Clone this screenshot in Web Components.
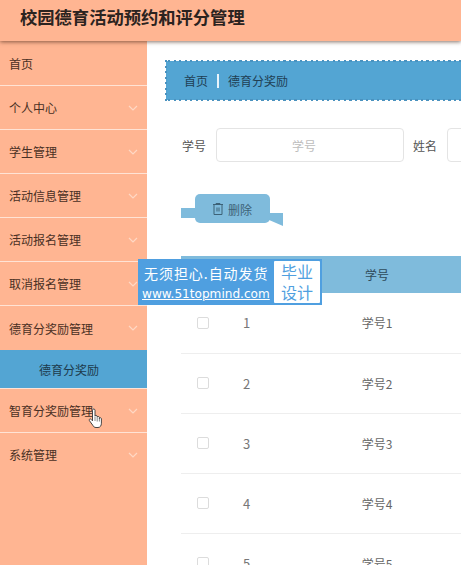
<!DOCTYPE html>
<html lang="zh">
<head>
<meta charset="utf-8">
<title>校园德育活动预约和评分管理</title>
<style>
  html, body {
    margin: 0;
    height: 100%;
    overflow: hidden;
    background: #fff;
    font-family: "Noto Sans CJK SC", "Liberation Sans", sans-serif;
    font-size: 12px;
    color: #333;
  }
</style>
</head>
<body>
<app-shell>
  <span slot="title">校园德育活动预约和评分管理</span>
  <side-nav slot="nav">
    <nav-item plain>首页</nav-item>
    <nav-item>个人中心</nav-item>
    <nav-item>学生管理</nav-item>
    <nav-item>活动信息管理</nav-item>
    <nav-item>活动报名管理</nav-item>
    <nav-item>取消报名管理</nav-item>
    <nav-item sub="德育分奖励">德育分奖励管理</nav-item>
    <nav-item>智育分奖励管理</nav-item>
    <nav-item last>系统管理</nav-item>
  </side-nav>
  <crumb-bar first="首页" second="德育分奖励"></crumb-bar>
  <search-row></search-row>
  <ribbon-button>删除</ribbon-button>
  <data-table></data-table>
</app-shell>
<promo-badge></promo-badge>
<hand-cursor></hand-cursor>

<script>
const chevron = `<svg width="10" height="6" viewBox="0 0 10 6" fill="none" stroke="#ffd8c4" stroke-width="1.2"><path d="M1 1l4 4 4-4"/></svg>`;

class AppShell extends HTMLElement {
  constructor() {
    super();
    this.attachShadow({mode: 'open'});
    this.shadowRoot.innerHTML = `
      <style>
        :host { display: flex; flex-direction: column; width: 461px; height: 565px; overflow: hidden; }
        header {
          flex: none;
          height: 41px;
          box-sizing: border-box;
          padding: 0 0 9px 20px;
          display: flex;
          align-items: center;
          background: #ffb592;
          box-shadow: 0 1px 4px rgba(70, 40, 25, .65);
          position: relative;
          z-index: 1;
          font-size: 17.3px;
          font-weight: 700;
          color: #2b2320;
        }
        .body { flex: 1; display: flex; min-height: 0; }
        .nav { flex: none; width: 147px; background: #ffb592; }
        main {
          flex: 1;
          min-width: 0;
          padding: 19px 0 0 18px;
          overflow: hidden;
        }
      </style>
      <header><slot name="title"></slot></header>
      <div class="body">
        <div class="nav"><slot name="nav"></slot></div>
        <main><slot></slot></main>
      </div>`;
  }
}

class SideNav extends HTMLElement {
  constructor() {
    super();
    this.attachShadow({mode: 'open'});
    this.shadowRoot.innerHTML = `
      <style>:host { display: block; }</style>
      <slot></slot>`;
  }
}

class NavItem extends HTMLElement {
  constructor() {
    super();
    this.attachShadow({mode: 'open'});
    const sub = this.getAttribute('sub');
    this.shadowRoot.innerHTML = `
      <style>
        :host { display: block; color: #4a3024; font-size: 12px; }
        .row {
          height: 43px;
          padding: 0 9px;
          display: flex;
          align-items: center;
          justify-content: space-between;
          border-bottom: 1px solid #ffe3d5;
        }
        .sub {
          height: 38px;
          display: flex;
          align-items: center;
          justify-content: center;
          padding-right: 9px;
          background: #53a5d3;
          color: #1d3a4c;
          border-bottom: 1px solid #ffe3d5;
        }
        :host([plain]) .row { height: 44px; }
        :host([sub]) .row { border-bottom: 0; height: 44px; }
        :host([last]) .row { border-bottom: 0; }
      </style>
      <div class="row"><span><slot></slot></span>${this.hasAttribute('plain') ? '' : chevron}</div>
      ${sub ? `<div class="sub">${sub}</div>` : ''}`;
  }
}

class CrumbBar extends HTMLElement {
  constructor() {
    super();
    this.attachShadow({mode: 'open'});
    const dot = '#4a92bf';
    this.shadowRoot.innerHTML = `
      <style>
        :host {
          display: flex;
          align-items: center;
          box-sizing: border-box;
          width: 320px;
          height: 41px;
          padding-left: 19px;
          color: #1f3f53;
          font-size: 12px;
          background:
            repeating-linear-gradient(90deg, ${dot} 0 2px, transparent 2px 5.5px) 3px 0 / 100% 2px no-repeat,
            repeating-linear-gradient(90deg, ${dot} 0 2px, transparent 2px 5.5px) 3px 100% / 100% 2px no-repeat,
            repeating-linear-gradient(0deg, ${dot} 0 2px, transparent 2px 5.5px) 0 0 / 2px 100% no-repeat,
            linear-gradient(#53a5d3, #53a5d3) 1px 1px / 100% 39px no-repeat;
        }
        i { width: 2px; height: 14px; margin: 0 9px; background: #e8f4fb; }
      </style>
      <span>${this.getAttribute('first')}</span><i></i><span>${this.getAttribute('second')}</span>`;
  }
}

class SearchRow extends HTMLElement {
  constructor() {
    super();
    this.attachShadow({mode: 'open'});
    this.shadowRoot.innerHTML = `
      <style>
        :host { display: flex; align-items: center; gap: 10px; margin: 27px 0 0 17px; width: 320px; color: #555; font-size: 12px; }
        label { flex: none; width: 24px; }
        .field {
          flex: none;
          box-sizing: border-box;
          width: 188px;
          height: 34px;
          padding-right: 12px;
          border: 1px solid #e4e4e4;
          border-radius: 4px;
          display: flex;
          align-items: center;
          justify-content: center;
          color: #bdbdbd;
        }
        .name { margin-left: -1px; }
        .second { width: 80px; }
      </style>
      <label>学号</label><div class="field">学号</div>
      <label class="name">姓名</label><div class="field second"></div>`;
  }
}

class RibbonButton extends HTMLElement {
  constructor() {
    super();
    this.attachShadow({mode: 'open'});
    this.shadowRoot.innerHTML = `
      <style>
        :host { display: block; position: relative; width: 102px; height: 33px; margin: 32px 0 0 16px; color: #3d6277; font-size: 12px; }
        .tail { position: absolute; background: #7fbbdc; }
        .left { left: 0; top: 14px; width: 16px; height: 10px; }
        .right { left: 87px; top: 19px; width: 15px; height: 13px; clip-path: polygon(0 0, 100% 0, 100% 100%, 0 50%); }
        .face {
          position: absolute;
          left: 14px;
          top: 0;
          width: 75px;
          height: 29px;
          padding-top: 1px;
          box-sizing: border-box;
          border-radius: 5px;
          background: #7fbbdc;
          display: flex;
          align-items: center;
          justify-content: center;
          gap: 5px;
        }
      </style>
      <div class="tail left"></div>
      <div class="tail right"></div>
      <div class="face">
        <svg width="10" height="12" viewBox="0 0 10 12" fill="none" stroke="#3d6277" stroke-width="1"><path d="M0 1.500h10M3 1.500V.5h4v1M1 1.500v10h8v-10M4 4.500v4M6 4.500v4"/></svg>
        <span><slot></slot></span>
      </div>`;
  }
}

class DataTable extends HTMLElement {
  constructor() {
    super();
    this.attachShadow({mode: 'open'});
    const rows = [1, 2, 3, 4, 5].map(n => `
      <div class="row">
        <span class="check"><b></b></span><span class="idx">${n}</span><span class="num">学号${n}</span>
      </div>`).join('');
    this.shadowRoot.innerHTML = `
      <style>
        :host { display: block; margin: 29px 0 0 16px; width: 320px; font-size: 12px; color: #666; }
        .head, .row { display: grid; grid-template-columns: 44px 78px 148px 1fr; align-items: center; }
        .head { height: 37px; background: #7fbbdc; color: #2e4a5a; }
        .row { height: 58px; padding-bottom: 1px; border-bottom: 1px solid #eee; }
        .head + .row { height: 59px; }
        .check { padding-left: 16px; }
        b { display: block; box-sizing: border-box; width: 12px; height: 12px; border: 1px solid #dcdcdc; border-radius: 2px; }
        .idx { padding-left: 18px; font-size: 13px; color: #777; }
        .num, .title { justify-self: center; }
      </style>
      <div class="head"><span></span><span></span><span class="title">学号</span></div>
      ${rows}`;
  }
}

class PromoBadge extends HTMLElement {
  constructor() {
    super();
    this.attachShadow({mode: 'open'});
    this.shadowRoot.innerHTML = `
      <style>
        :host {
          position: absolute;
          left: 138px;
          top: 259px;
          width: 184px;
          height: 46px;
          box-sizing: border-box;
          padding: 2px 2px 2px 4px;
          background: #4f9fe0;
          color: #fff;
          display: flex;
          justify-content: space-between;
          z-index: 3;
        }
        .left { display: flex; flex-direction: column; white-space: nowrap; }
        .slogan { padding-left: 2px; font-size: 14px; line-height: 24px; letter-spacing: .95px; }
        .url { margin-top: 1px; font-family: "DejaVu Sans", sans-serif; font-size: 12.1px; line-height: 17px; text-decoration: underline; }
        .tag {
          width: 46px;
          background: #fff;
          color: #4f9fe0;
          font-size: 16px;
          line-height: 21px;
          text-align: center;
          border-radius: 1px;
          box-sizing: border-box;
        }
      </style>
      <div class="left"><span class="slogan">无须担心.自动发货</span><span class="url">www.51topmind.com</span></div>
      <div class="tag">毕业<br>设计</div>`;
  }
}

class HandCursor extends HTMLElement {
  constructor() {
    super();
    this.attachShadow({mode: 'open'});
    this.shadowRoot.innerHTML = `
      <style>
        :host { position: absolute; left: 88px; top: 408px; width: 17px; height: 21px; z-index: 3; }
      </style>
      <svg width="17" height="21" viewBox="0 0 17 21" fill="#fff" stroke="#333" stroke-width=".9" stroke-linejoin="round">
        <path d="M4.500 2.200c0-1.600 2.500-1.600 2.500 0v6c0-1 2-1 2.200 0v1c0-1 2-1 2.200.2v1c.2-1 2-.8 2 .4v4.400c0 2.500-1.200 4.300-3.400 4.300H8c-1.700 0-2.400-.8-3.200-2.200L1.400 12.600c-.8-1.500 1.100-2.300 2-1l1.100 1.200z"/>
        <path d="M7 9v4M9.200 9.500v4M11.400 10v3.500" fill="none" stroke-width=".6"/>
      </svg>`;
  }
}

customElements.define('app-shell', AppShell);
customElements.define('side-nav', SideNav);
customElements.define('nav-item', NavItem);
customElements.define('crumb-bar', CrumbBar);
customElements.define('search-row', SearchRow);
customElements.define('ribbon-button', RibbonButton);
customElements.define('data-table', DataTable);
customElements.define('promo-badge', PromoBadge);
customElements.define('hand-cursor', HandCursor);
</script>
</body>
</html>
